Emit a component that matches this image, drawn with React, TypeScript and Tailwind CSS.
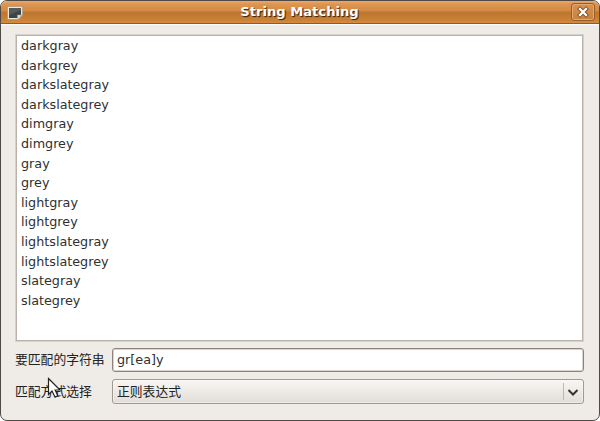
const matches = [
  'darkgray', 'darkgrey', 'darkslategray', 'darkslategrey', 'dimgray', 'dimgrey', 'gray',
  'grey', 'lightgray', 'lightgrey', 'lightslategray', 'lightslategrey', 'slategray', 'slategrey',
];

function WindowIcon() {
  return (
    <svg className="ml-[6px] mt-[5px] h-[14px] w-[16px] shrink-0" viewBox="0 0 16 14">
      <path d="M.5.5h15V9l-4 4.5H.5z" fill="#e9e7e2" stroke="#a08d79" strokeWidth="0.6" />
      <path d="M2 2h12v6.5L10.5 12H2z" fill="#3f4442" />
      <path d="M2 2h12v2L2 9z" fill="#565b58" />
      <path d="M10.5 13V9h4.3z" fill="#dedfda" stroke="#a2a39f" strokeWidth="0.5" />
    </svg>
  );
}

function TitleBar() {
  return (
    <header className="flex h-[23px] shrink-0 border-b border-[#8f5a28] bg-[linear-gradient(180deg,#eea968_0px,#df9550_3px,#d38a43_10px,#bd762f_11px,#cb8136_19px,#d58b40_22px)]">
      <WindowIcon />
      <h1 className="flex-1 pl-[5px] text-center text-[13.1px] leading-[22px] font-bold text-white [text-shadow:1px_1px_1px_#2b1c10]">
        String Matching
      </h1>
      <button aria-label="Close" className="mt-[2px] mr-[4px] flex h-[18px] w-[24px] items-center justify-center rounded-[3px] border border-[#925e2e] bg-linear-to-b from-[#d99250] to-[#c98238] shadow-[inset_0_0_0_1px_#e0a873]">
        <svg className="h-[12px] w-[12px]" viewBox="0 0 12 12">
          <path d="m3 3 6 6M9 3 3 9" stroke="#71451f" strokeWidth="4" strokeLinecap="square" />
          <path d="m3 3 6 6M9 3 3 9" stroke="#fff" strokeWidth="2.4" strokeLinecap="square" />
        </svg>
      </button>
    </header>
  );
}

export default function App() {
  return (
    <div className="relative h-[421px] w-[600px] overflow-hidden bg-white font-['DejaVu_Sans','Noto_Sans_CJK_SC',sans-serif] text-[12.75px] text-[#303030]">
      <div className="flex h-full flex-col overflow-hidden rounded-[7px] border border-[#4f4a45] bg-[#efebe7]">
        <TitleBar />
        <main className="flex flex-1 flex-col border-t border-white pt-[9px] pr-[15px] pl-[14px]">
          <ul className="h-[308px] shrink-0 border border-[#d6d1cb] bg-white pt-[2px] pl-[5px] shadow-[inset_0_0_0_1px_#b9b3ac]">
            {matches.map((name) => (
              <li key={name} className="h-[19.62px] leading-[18px]">{name}</li>
            ))}
          </ul>
          <div className="mt-[6px] flex h-[24px] shrink-0 items-center">
            <label htmlFor="pattern" className="w-[97px] shrink-0 text-[12.8px] whitespace-nowrap text-[#222]">要匹配的字符串</label>
            <input
              id="pattern"
              defaultValue="gr[ea]y"
              className="h-[24px] min-w-0 flex-1 rounded-[3px] border border-[#8f8379] bg-white px-[4px] pb-[1px] text-[12.75px] shadow-[inset_0_0_0_1px_#d9d4cf] outline-none"
            />
          </div>
          <div className="mt-[7px] flex h-[25px] shrink-0 items-center">
            <span className="w-[97px] shrink-0 text-[12.8px] whitespace-nowrap text-[#222]">匹配方式选择</span>
            <button className="flex h-[25px] flex-1 items-center rounded-[3px] border border-[#a19890] bg-linear-to-b from-[#f8f6f4] to-[#e2ddd8] pl-[4px] shadow-[inset_0_0_0_1px_#ffffff66]">
              <span className="flex-1 text-left text-[12.8px] text-[#222]">正则表达式</span>
              <span className="h-[17px] w-px bg-[#bdb7b1]" />
              <svg className="mr-[4px] ml-[3px] h-[12px] w-[12px]" viewBox="0 0 12 12">
                <path d="m1.5 4 4.5 4.5L10.500 4" fill="none" stroke="#333" strokeWidth="2" />
              </svg>
            </button>
          </div>
        </main>
      </div>
      <svg className="absolute top-[377px] left-[47px] h-[24px] w-[15px]" viewBox="0 0 15 24">
        <path d="M1.500 1.500v16l3.500-3.500 3 6 2.800-1.300-2.600-5.700h4.800z" fill="#fff" stroke="#222" strokeWidth="1.2" />
      </svg>
    </div>
  );
}
